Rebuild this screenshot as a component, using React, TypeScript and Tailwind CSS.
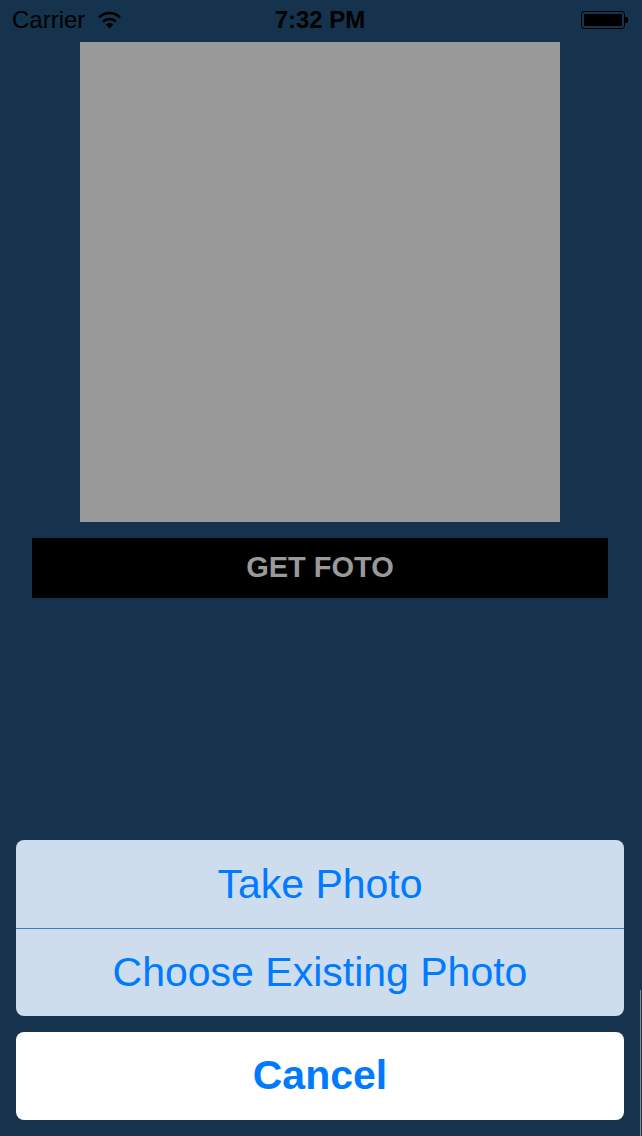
import React from 'react';

const Wifi: React.FC = () => (
  <svg width="25" height="18" viewBox="0 0 24 18" className="ml-[12px]">
    <path d="M12 17.5 L8.3 13.4 A5.4 5.4 0 0 1 15.7 13.4 Z" fill="#000" />
    <path d="M5.6 10.6 A9.2 9.2 0 0 1 18.4 10.6" stroke="#000" strokeWidth="2.6" fill="none" />
    <path d="M1.6 6.4 A14.6 14.6 0 0 1 22.4 6.4" stroke="#000" strokeWidth="2.6" fill="none" />
  </svg>
);

const Battery: React.FC = () => (
  <div className="flex items-center">
    <div className="w-[44px] h-[18px] rounded-[3px] border border-black p-[2px]">
      <div className="w-full h-full bg-black rounded-[1px]" />
    </div>
    <div className="w-[3px] h-[6px] bg-black rounded-r-[1px]" />
  </div>
);

const StatusBar: React.FC = () => (
  <div className="relative h-10 flex items-center px-3 text-black font-['Liberation_Sans',sans-serif]">
    <div className="flex items-center">
      <span className="text-[24px] leading-none">Carrier</span>
      <Wifi />
    </div>
    <span className="absolute left-0 right-0 text-center text-[24px] font-bold leading-none">7:32 PM</span>
    <div className="ml-auto">
      <Battery />
    </div>
  </div>
);

export default function App() {
  const sheetActions = ['Take Photo', 'Choose Existing Photo'];

  return (
    <div className="relative w-[642px] min-h-[1136px] bg-[#15334d] font-['Liberation_Sans',sans-serif]">
      <div className="w-[640px] min-h-[1136px] flex flex-col">
        <StatusBar />

        <div className="mt-[2px] mx-auto w-[480px] h-[480px] bg-[#999999]" />

        <button className="mt-4 mx-8 h-[60px] bg-black text-[#9a9a9a] text-[29px] font-bold">
          GET FOTO
        </button>

        <div className="mt-auto px-4 pb-4 flex flex-col gap-4">
          <div className="rounded-[8px] bg-[#cddded] overflow-hidden flex flex-col">
            {sheetActions.map((label, i) => (
              <div
                key={label}
                className={
                  i === 0
                    ? 'h-[89px] flex items-center justify-center border-b border-[#3a7bc8] text-[41px] text-[#007aff] pt-[2px]'
                    : 'h-[87px] flex items-center justify-center text-[41px] text-[#007aff]'
                }
              >
                {label}
              </div>
            ))}
          </div>
          <div className="h-[88px] rounded-[8px] bg-white flex items-center justify-center text-[41px] font-bold text-[#007aff]">
            Cancel
          </div>
        </div>
      </div>

      {/* scroll indicator at the right edge */}
      <div className="absolute left-[640px] top-[990px] bottom-0 w-px bg-[#8a8a8a]" />
    </div>
  );
}
